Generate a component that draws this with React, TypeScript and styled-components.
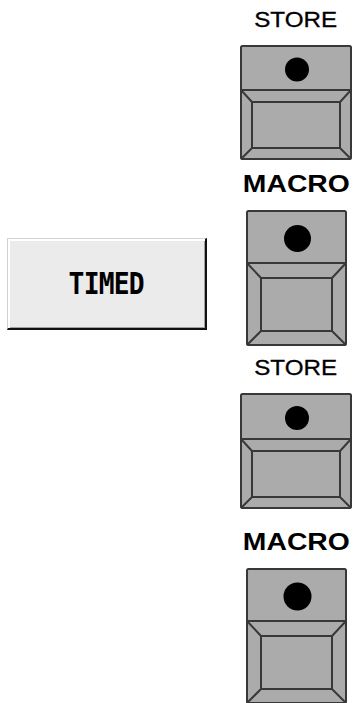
import React from 'react';
import styled, { createGlobalStyle } from 'styled-components';

interface KeyShape {
  label: string;
  bold: boolean;
  width: number;
  height: number;
  split: number;
  inset: number;
  dot: number;
  spaceAbove: number;
}

const colors = {
  page: '#FFFFFF',
  ink: '#000000',
  keyFill: '#ABABAB',
  keyLine: '#383838',
  buttonFace: '#EBEBEB',
  buttonLight: '#FFFFFF',
  buttonEdge: '#D2D2D2',
  buttonShade: '#A0A0A0',
  buttonDark: '#111111',
};

const keys: KeyShape[] = [
  { label: 'STORE', bold: false, width: 112, height: 115, split: 45, inset: 12, dot: 12, spaceAbove: 9 },
  { label: 'MACRO', bold: true, width: 101, height: 136, split: 53, inset: 15, dot: 13.5, spaceAbove: 12 },
  { label: 'STORE', bold: false, width: 112, height: 116, split: 46, inset: 12, dot: 12, spaceAbove: 11 },
  { label: 'MACRO', bold: true, width: 101, height: 136, split: 53, inset: 15, dot: 14, spaceAbove: 21 },
];

const GlobalStyle = createGlobalStyle`
  html, body {
    margin: 0;
    padding: 0;
    background: ${colors.page};
  }
  body {
    width: 353px;
    height: 703px;
    overflow: hidden;
    font-family: "Liberation Sans", Arial, sans-serif;
  }
`;

const Page = styled.div`
  display: flex;
  flex-direction: row;
  width: 353px;
  height: 703px;
  overflow: hidden;
`;

const LeftPane = styled.div`
  width: 239px;
  padding: 238px 0 0 7px;
  box-sizing: border-box;
`;

const TimedButton = styled.button`
  display: flex;
  align-items: center;
  justify-content: center;
  width: 200px;
  height: 92px;
  margin: 0;
  padding: 0;
  box-sizing: border-box;
  background: ${colors.buttonFace};
  border-style: solid;
  border-width: 1px 2px 2px 1px;
  border-color: ${colors.buttonEdge} ${colors.buttonDark} ${colors.buttonDark} ${colors.buttonEdge};
  box-shadow: inset 2px 2px 0 ${colors.buttonLight}, inset -1px -1px 0 ${colors.buttonShade};
  cursor: pointer;
`;

const TimedText = styled.span`
  display: inline-block;
  font-family: "DejaVu Sans Mono", "Liberation Mono", monospace;
  font-weight: bold;
  font-size: 31px;
  line-height: 1;
  letter-spacing: -1px;
  color: ${colors.ink};
  transform: scaleX(0.85);
`;

const RightPane = styled.div`
  width: 114px;
  display: flex;
  flex-direction: column;
  align-items: center;
`;

const KeyGroup = styled.div<{ $spaceAbove: number }>`
  display: flex;
  flex-direction: column;
  align-items: center;
  gap: 14px;
  margin-top: ${p => p.$spaceAbove}px;
`;

const KeyLabel = styled.div<{ $bold: boolean }>`
  font-family: "Liberation Sans", Arial, sans-serif;
  font-size: ${p => (p.$bold ? 24 : 22)}px;
  font-weight: ${p => (p.$bold ? 'bold' : 'normal')};
  line-height: 1;
  color: ${colors.ink};
  transform: scaleX(${p => (p.$bold ? 1.18 : 1.1)});
  -webkit-text-stroke: ${p => (p.$bold ? '0' : '0.3px')} ${colors.ink};
`;

const KeySvg = styled.svg`
  display: block;
  flex-shrink: 0;
`;

function KeyFace({ width, height, split, inset, dot }: KeyShape) {
  const left = inset;
  const right = width - inset;
  const top = split + inset;
  const bottom = height - inset;
  const stroke = { stroke: colors.keyLine, strokeWidth: 2 };

  return (
    <KeySvg width={width} height={height} viewBox={`0 0 ${width} ${height}`}>
      <rect x={1} y={1} width={width - 2} height={height - 2} rx={1.5} fill={colors.keyFill} {...stroke} />
      <line x1={1} y1={split} x2={width - 1} y2={split} {...stroke} />
      <line x1={1} y1={split} x2={left} y2={top} {...stroke} />
      <line x1={width - 1} y1={split} x2={right} y2={top} {...stroke} />
      <line x1={1} y1={height - 1} x2={left} y2={bottom} {...stroke} />
      <line x1={width - 1} y1={height - 1} x2={right} y2={bottom} {...stroke} />
      <rect x={left} y={top} width={right - left} height={bottom - top} fill={colors.keyFill} {...stroke} />
      <circle cx={width / 2 + 1} cy={split / 2 + 2} r={dot} fill={colors.ink} />
    </KeySvg>
  );
}

export default function App() {
  return (
    <Page>
      <GlobalStyle />
      <LeftPane>
        <TimedButton>
          <TimedText>TIMED</TimedText>
        </TimedButton>
      </LeftPane>
      <RightPane>
        {keys.map((key, index) => (
          <KeyGroup key={index} $spaceAbove={key.spaceAbove}>
            <KeyLabel $bold={key.bold}>{key.label}</KeyLabel>
            <KeyFace {...key} />
          </KeyGroup>
        ))}
      </RightPane>
    </Page>
  );
}
